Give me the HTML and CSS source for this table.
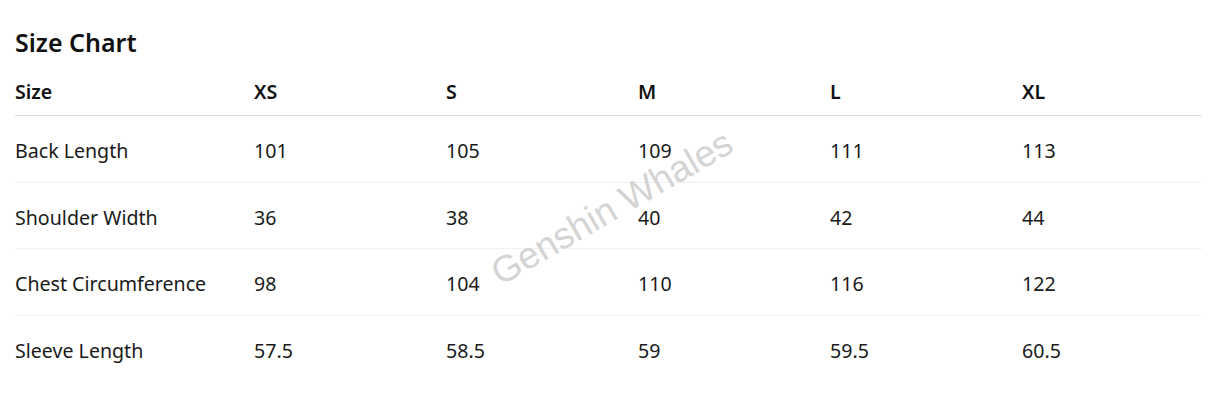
FILE: index.html
```html
<!DOCTYPE html>
<html lang="en">
<head>
<meta charset="utf-8">
<title>Size Chart</title>
<link rel="stylesheet" href="styles.css">
</head>
<body>
<div class="page">
  <h2 class="title">Size Chart</h2>
  <div class="chart">
    <div class="row head">
      <div class="cell">Size</div><div class="cell">XS</div><div class="cell">S</div><div class="cell">M</div><div class="cell">L</div><div class="cell">XL</div>
    </div>
    <div class="row">
      <div class="cell">Back Length</div><div class="cell">101</div><div class="cell">105</div><div class="cell">109</div><div class="cell">111</div><div class="cell">113</div>
    </div>
    <div class="row">
      <div class="cell">Shoulder Width</div><div class="cell">36</div><div class="cell">38</div><div class="cell">40</div><div class="cell">42</div><div class="cell">44</div>
    </div>
    <div class="row">
      <div class="cell">Chest Circumference</div><div class="cell">98</div><div class="cell">104</div><div class="cell">110</div><div class="cell">116</div><div class="cell">122</div>
    </div>
    <div class="row last">
      <div class="cell">Sleeve Length</div><div class="cell">57.5</div><div class="cell">58.5</div><div class="cell">59</div><div class="cell">59.5</div><div class="cell">60.5</div>
    </div>
  </div>
  <div class="watermark">Genshin Whales</div>
</div>
</body>
</html>
```
FILE: styles.css
```css
* { box-sizing: border-box; }
html, body { margin: 0; padding: 0; background: #fff; }
body {
  font-family: "Noto Sans", "Open Sans", sans-serif;
  color: #1a1a1a;
}
.page {
  position: relative;
  padding: 24px 17px 0 15px;
  width: 1219px;
  height: 409px;
  overflow: hidden;
}
.title {
  margin: 0;
  font-size: 25px;
  font-weight: 600;
  line-height: 36px;
  color: #111;
}
.chart {
  margin-top: 14px;
  width: 1187px;
}
.row {
  display: grid;
  grid-template-columns: 239px 192px 192px 192px 192px 1fr;
  align-items: center;
  height: 66.7px;
  padding-top: 3px;
  border-bottom: 1px solid #f0f0f0;
  font-size: 19.6px;
}
.row.head {
  height: 42px;
  padding-top: 4px;
  align-items: start;
  font-weight: 600;
  border-bottom-color: #dedede;
  color: #111;
}
.row.last { border-bottom: none; }
.cell { white-space: nowrap; }
.watermark {
  position: absolute;
  left: 612px;
  top: 208px;
  transform: translate(-50%, -50%) rotate(-30deg);
  font-family: "Liberation Sans", Arial, sans-serif;
  font-size: 37px;
  color: #d4d4d4;
  white-space: nowrap;
  pointer-events: none;
}
```
